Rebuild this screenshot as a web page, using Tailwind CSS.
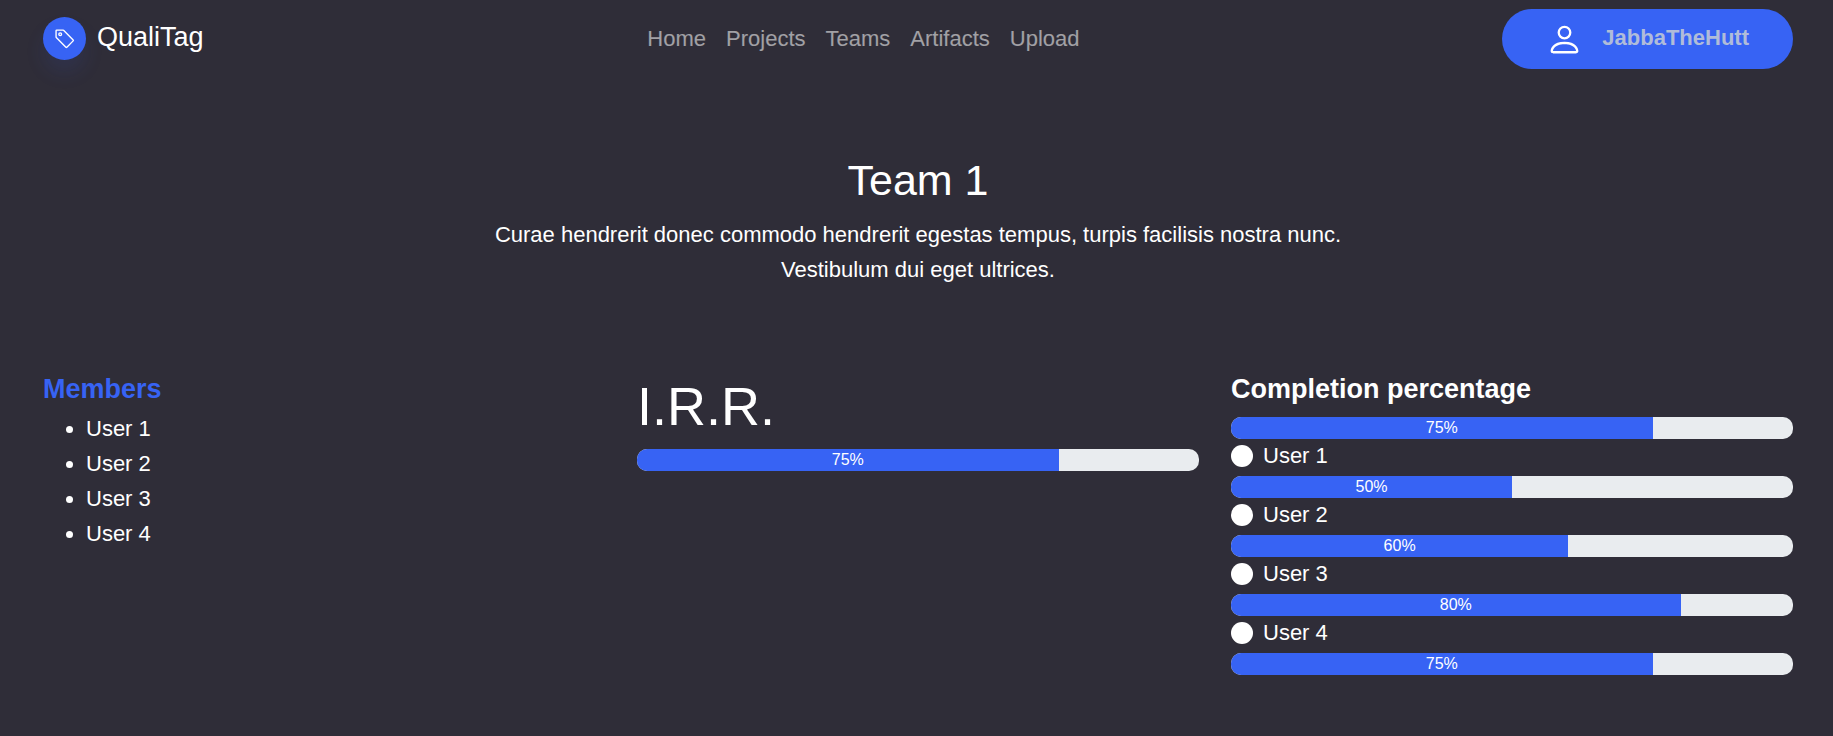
<!DOCTYPE html>
<html lang="en">
<head>
<meta charset="utf-8">
<meta name="viewport" content="width=device-width, initial-scale=1">
<title>QualiTag – Team 1</title>
<script src="https://cdn.jsdelivr.net/npm/@tailwindcss/browser@4"></script>
</head>
<body class="min-h-screen bg-[#2f2d38] font-['Liberation_Sans',Arial,sans-serif] text-[22px] leading-[35px] text-white">
<nav class="flex items-center justify-between pt-[9px] pr-10 pl-[43px]">
  <a href="#" class="flex items-center gap-[11px] pb-px text-[27px]">
    <span class="flex size-[43px] items-center justify-center rounded-full bg-[#3763f4] shadow-[0_13px_20px_rgba(55,99,244,0.1)]">
      <svg class="size-[22px]" viewBox="0 0 16 16" fill="currentColor" aria-hidden="true"><path d="M6 4.500a1.500 1.500 0 1 1-3 0 1.500 1.500 0 0 1 3 0m-1 0a.5.5 0 1 0-1 0 .5.5 0 0 0 1 0"/><path d="M2 1h4.586a1 1 0 0 1 .707.293l7 7a1 1 0 0 1 0 1.414l-4.586 4.586a1 1 0 0 1-1.414 0l-7-7A1 1 0 0 1 1 6.586V2a1 1 0 0 1 1-1m0 5.586 7 7L13.586 9l-7-7H2z"/></svg>
    </span>
    <span class="pb-0.5">QualiTag</span>
  </a>
  <ul class="flex gap-5 pb-0.5 pl-[21px] text-white/55">
    <li><a href="#">Home</a></li>
    <li><a href="#">Projects</a></li>
    <li><a href="#">Teams</a></li>
    <li><a href="#">Artifacts</a></li>
    <li><a href="#">Upload</a></li>
  </ul>
  <button type="button" class="flex h-[60px] items-center gap-[19px] rounded-full bg-[#3763f4] px-11 font-bold text-[#b0bcd9]">
    <svg class="size-[37px] text-white" viewBox="0 0 16 16" fill="currentColor" aria-hidden="true"><path d="M8 8a3 3 0 1 0 0-6 3 3 0 0 0 0 6m2-3a2 2 0 1 1-4 0 2 2 0 0 1 4 0m4 8c0 1-1 1-1 1H3s-1 0-1-1 1-4 6-4 6 3 6 4m-1-.004c-.001-.246-.154-.986-.832-1.664C11.516 10.680 10.289 10 8 10s-3.516.68-4.168 1.332c-.678.678-.83 1.418-.832 1.664z"/></svg>
    <span class="pb-1">JabbaTheHutt</span>
  </button>
</nav>
<main class="pr-10 pl-[43px]">
  <header class="mx-auto max-w-[850px] pt-[85px] text-center">
    <h1 class="mb-[11px] text-[43px] leading-[52px]">Team 1</h1>
    <p>Curae hendrerit donec commodo hendrerit egestas tempus, turpis facilisis nostra nunc. Vestibulum dui eget ultrices.</p>
  </header>
  <div class="grid grid-cols-3 gap-8 pt-[86px]">
    <section>
      <h2 class="mb-[5px] text-[27px] leading-[33px] font-bold text-[#3763f4]">Members</h2>
      <ul class="list-disc pl-[43px]">
        <li>User 1</li>
        <li>User 2</li>
        <li>User 3</li>
        <li>User 4</li>
      </ul>
    </section>
    <section>
      <h2 class="mb-[10px] text-[54px] leading-[66px]">I.R.R.</h2>
      <div role="progressbar" aria-label="I.R.R." aria-valuenow="75" class="h-[22px] overflow-hidden rounded-[10px] bg-[#e9ecef] text-center text-[16px] leading-[22px]"><div class="bg-[#3763f4]" style="width:75%">75%</div></div>
    </section>
    <section>
      <h2 class="mb-[11px] text-[27px] leading-[33px] font-bold">Completion percentage</h2>
      <div role="progressbar" aria-label="Total" aria-valuenow="75" class="h-[22px] overflow-hidden rounded-[10px] bg-[#e9ecef] text-center text-[16px] leading-[22px]"><div class="bg-[#3763f4]" style="width:75%">75%</div></div>
      <div class="flex h-[37px] items-center gap-[10px] pb-1"><input id="u1" name="user" type="radio" class="mt-px size-[22px] appearance-none rounded-full bg-white checked:border-[6px] checked:border-[#3763f4]"><label for="u1">User 1</label></div>
      <div role="progressbar" aria-label="User 1" aria-valuenow="50" class="h-[22px] overflow-hidden rounded-[10px] bg-[#e9ecef] text-center text-[16px] leading-[22px]"><div class="bg-[#3763f4]" style="width:50%">50%</div></div>
      <div class="flex h-[37px] items-center gap-[10px] pb-1"><input id="u2" name="user" type="radio" class="mt-px size-[22px] appearance-none rounded-full bg-white checked:border-[6px] checked:border-[#3763f4]"><label for="u2">User 2</label></div>
      <div role="progressbar" aria-label="User 2" aria-valuenow="60" class="h-[22px] overflow-hidden rounded-[10px] bg-[#e9ecef] text-center text-[16px] leading-[22px]"><div class="bg-[#3763f4]" style="width:60%">60%</div></div>
      <div class="flex h-[37px] items-center gap-[10px] pb-1"><input id="u3" name="user" type="radio" class="mt-px size-[22px] appearance-none rounded-full bg-white checked:border-[6px] checked:border-[#3763f4]"><label for="u3">User 3</label></div>
      <div role="progressbar" aria-label="User 3" aria-valuenow="80" class="h-[22px] overflow-hidden rounded-[10px] bg-[#e9ecef] text-center text-[16px] leading-[22px]"><div class="bg-[#3763f4]" style="width:80%">80%</div></div>
      <div class="flex h-[37px] items-center gap-[10px] pb-1"><input id="u4" name="user" type="radio" class="mt-px size-[22px] appearance-none rounded-full bg-white checked:border-[6px] checked:border-[#3763f4]"><label for="u4">User 4</label></div>
      <div role="progressbar" aria-label="User 4" aria-valuenow="75" class="h-[22px] overflow-hidden rounded-[10px] bg-[#e9ecef] text-center text-[16px] leading-[22px]"><div class="bg-[#3763f4]" style="width:75%">75%</div></div>
    </section>
  </div>
</main>
</body>
</html>
